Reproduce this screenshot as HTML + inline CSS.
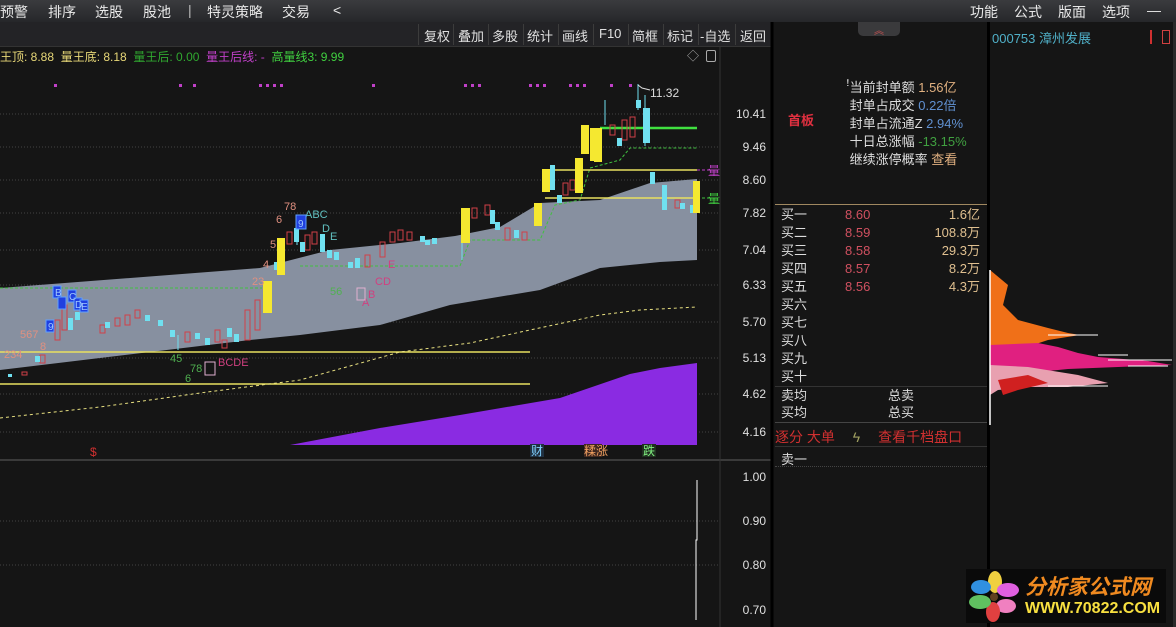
<!DOCTYPE html>
<html><head><meta charset="utf-8"><style>
*{margin:0;padding:0;box-sizing:border-box}
body{width:1176px;height:627px;background:#151515;overflow:hidden;position:relative;font-family:"Liberation Sans","Noto Sans CJK SC",sans-serif;color:#ddd}
.a{position:absolute;white-space:nowrap}
#top{position:absolute;left:0;top:0;width:1176px;height:22px;background:linear-gradient(#3a3b3e,#26272a)}
#top span{position:absolute;top:2px;font-size:14px;color:#e8e8e8}
#tb{position:absolute;left:0;top:22px;width:772px;height:25px;background:#232326;border-bottom:1px solid #333}
#tb span{position:absolute;top:4px;font-size:13px;color:#e0e0e0}
#tb i{position:absolute;top:2px;width:1px;height:21px;background:#3c3c3c}
.r{font-size:13px;color:#ddd}
.red{color:#e0505a}
</style></head><body>
<div id="top">
<span style="left:0">预警</span><span style="left:48px">排序</span><span style="left:95px">选股</span><span style="left:143px">股池</span><span style="left:188px;color:#bbb">|</span><span style="left:207px">特灵策略</span><span style="left:282px">交易</span><span style="left:333px">&lt;</span>
<span style="left:970px">功能</span><span style="left:1014px">公式</span><span style="left:1058px">版面</span><span style="left:1102px">选项</span><span style="left:1147px">—</span>
</div>
<div id="tb">
<i style="left:418px"></i><span style="left:424px">复权</span><i style="left:453px"></i><span style="left:458px">叠加</span><i style="left:488px"></i><span style="left:492px">多股</span><i style="left:523px"></i><span style="left:527px">统计</span><i style="left:558px"></i><span style="left:562px">画线</span><i style="left:593px"></i><span style="left:599px">F10</span><i style="left:628px"></i><span style="left:632px">简框</span><i style="left:663px"></i><span style="left:667px">标记</span><i style="left:698px"></i><span style="left:700px">-自选</span><i style="left:735px"></i><span style="left:740px">返回</span>
</div>
<div class="a" style="left:0;top:48px;font-size:12px"><span style="color:#e8d878">王顶: 8.88 &nbsp;量王底: 8.18</span> &nbsp;<span style="color:#30a830">量王后: 0.00</span> &nbsp;<span style="color:#c040c8">量王后线: -</span> &nbsp;<span style="color:#40d040">高量线3: 9.99</span></div>
<div class="a" style="left:687px;top:47px;font-size:12px;color:#aaa">◇</div>
<div class="a" style="left:706px;top:50px;width:10px;height:12px;border:1px solid #aaa;border-radius:2px"></div>

<svg class="a" style="left:0;top:0" width="775" height="627">
<g stroke="#444" stroke-dasharray="1,2" stroke-width="1">
<line x1="0" y1="114" x2="720" y2="114"/><line x1="0" y1="147" x2="720" y2="147"/><line x1="0" y1="180" x2="720" y2="180"/><line x1="0" y1="213" x2="720" y2="213"/><line x1="0" y1="250" x2="720" y2="250"/><line x1="0" y1="285" x2="720" y2="285"/><line x1="0" y1="322" x2="720" y2="322"/><line x1="0" y1="358" x2="720" y2="358"/><line x1="0" y1="394" x2="720" y2="394"/><line x1="0" y1="432" x2="720" y2="432"/>
<line x1="0" y1="521" x2="720" y2="521"/><line x1="0" y1="565" x2="720" y2="565"/>
</g>
<polygon fill="#8790a0" points="0,288 260,268 330,250 400,243 455,236 500,227 540,203 600,200 650,183 697,179 697,260 660,262 600,268 540,290 450,305 380,325 300,335 250,340 150,352 0,370"/>
<polygon fill="#8a2be2" points="290,445 380,428 460,415 560,398 630,374 660,368 697,363 697,445"/>
<line x1="0" y1="352" x2="530" y2="352" stroke="#e8e060" stroke-width="1.5"/>
<line x1="0" y1="384" x2="530" y2="384" stroke="#e8e060" stroke-width="1.5"/>
<polyline fill="none" stroke="#e8e080" stroke-dasharray="3,3" points="0,418 100,407 200,393 300,380 400,352 470,343 530,330 600,315 640,310 697,307"/>
<line x1="0" y1="288" x2="262" y2="288" stroke="#40c040" stroke-dasharray="3,2"/>
<polyline fill="none" stroke="#40c040" stroke-dasharray="3,2" points="300,266 460,266 470,240 540,240 555,205 580,200 590,168 620,160 630,148 697,148"/>
<line x1="600" y1="128" x2="697" y2="128" stroke="#40e040" stroke-width="2.5"/>
<line x1="545" y1="170" x2="697" y2="170" stroke="#e8e060" stroke-width="1.5"/>
<line x1="545" y1="198" x2="697" y2="198" stroke="#e8e060" stroke-width="1.5"/>
<line x1="697" y1="170" x2="712" y2="170" stroke="#c040c8" stroke-dasharray="3,2"/>
<line x1="697" y1="198" x2="712" y2="198" stroke="#40c040" stroke-dasharray="3,2"/>
<g fill="#c040c8">
<rect x="54" y="84" width="3" height="3"/><rect x="179" y="84" width="3" height="3"/><rect x="193" y="84" width="3" height="3"/><rect x="259" y="84" width="3" height="3"/><rect x="266" y="84" width="3" height="3"/><rect x="273" y="84" width="3" height="3"/><rect x="280" y="84" width="3" height="3"/><rect x="372" y="84" width="3" height="3"/><rect x="464" y="84" width="3" height="3"/><rect x="471" y="84" width="3" height="3"/><rect x="478" y="84" width="3" height="3"/><rect x="529" y="84" width="3" height="3"/><rect x="536" y="84" width="3" height="3"/><rect x="543" y="84" width="3" height="3"/><rect x="569" y="84" width="3" height="3"/><rect x="576" y="84" width="3" height="3"/><rect x="583" y="84" width="3" height="3"/><rect x="610" y="84" width="3" height="3"/><rect x="629" y="84" width="3" height="3"/>
</g>
<g fill="none" stroke="#d04048" stroke-width="1">
<rect x="22" y="372" width="5" height="3"/><rect x="40" y="355" width="5" height="8"/><rect x="55" y="320" width="5" height="20"/><rect x="62" y="305" width="5" height="25"/><rect x="100" y="325" width="5" height="8"/><rect x="115" y="318" width="5" height="8"/><rect x="125" y="315" width="5" height="10"/><rect x="135" y="310" width="5" height="8"/><rect x="185" y="332" width="5" height="10"/><rect x="215" y="330" width="5" height="12"/><rect x="222" y="340" width="5" height="8"/><rect x="245" y="310" width="5" height="30"/><rect x="255" y="300" width="5" height="30"/><rect x="287" y="232" width="5" height="12"/><rect x="305" y="235" width="5" height="15"/><rect x="312" y="232" width="5" height="12"/><rect x="365" y="255" width="5" height="12"/><rect x="380" y="242" width="5" height="15"/><rect x="390" y="232" width="5" height="10"/><rect x="398" y="230" width="5" height="10"/><rect x="407" y="232" width="5" height="8"/><rect x="472" y="208" width="5" height="10"/><rect x="485" y="205" width="5" height="10"/><rect x="505" y="228" width="5" height="12"/><rect x="522" y="232" width="5" height="8"/><rect x="563" y="183" width="5" height="12"/><rect x="570" y="180" width="5" height="10"/><rect x="610" y="125" width="5" height="10"/><rect x="622" y="120" width="5" height="20"/><rect x="630" y="117" width="5" height="20"/><rect x="675" y="200" width="5" height="8"/>
</g>
<g fill="#70e0f0">
<rect x="8" y="374" width="4" height="3"/><rect x="35" y="356" width="5" height="6"/><rect x="68" y="318" width="5" height="12"/><rect x="75" y="312" width="5" height="8"/><rect x="105" y="322" width="5" height="6"/><rect x="145" y="315" width="5" height="6"/><rect x="158" y="320" width="5" height="6"/><rect x="170" y="330" width="5" height="7"/><rect x="195" y="333" width="5" height="6"/><rect x="205" y="338" width="5" height="7"/><rect x="227" y="328" width="5" height="9"/><rect x="234" y="334" width="5" height="8"/><rect x="274" y="262" width="5" height="8"/><rect x="294" y="228" width="5" height="14"/><rect x="300" y="242" width="5" height="10"/><rect x="320" y="234" width="5" height="18"/><rect x="327" y="250" width="5" height="8"/><rect x="334" y="252" width="5" height="8"/><rect x="355" y="258" width="5" height="10"/><rect x="348" y="262" width="5" height="6"/><rect x="420" y="236" width="5" height="6"/><rect x="425" y="240" width="5" height="5"/><rect x="432" y="238" width="5" height="6"/><rect x="490" y="210" width="5" height="14"/><rect x="495" y="222" width="5" height="8"/><rect x="514" y="230" width="5" height="8"/><rect x="550" y="165" width="5" height="25"/><rect x="557" y="195" width="5" height="8"/><rect x="617" y="138" width="5" height="8"/><rect x="636" y="100" width="5" height="8"/><rect x="643" y="108" width="7" height="35"/><rect x="650" y="172" width="5" height="12"/><rect x="662" y="185" width="5" height="25"/><rect x="680" y="203" width="5" height="6"/><rect x="690" y="205" width="5" height="8"/>
</g>
<g stroke="#70e0f0"><line x1="645" y1="95" x2="645" y2="146"/><line x1="605" y1="100" x2="605" y2="125"/><line x1="638" y1="84" x2="638" y2="110"/><line x1="297" y1="215" x2="297" y2="245"/><line x1="462" y1="236" x2="462" y2="260"/><line x1="178" y1="335" x2="178" y2="350"/></g>
<g fill="#f5e830">
<rect x="263" y="281" width="9" height="32"/><rect x="277" y="238" width="8" height="37"/><rect x="461" y="208" width="9" height="35"/><rect x="534" y="203" width="8" height="23"/><rect x="542" y="169" width="8" height="23"/><rect x="575" y="158" width="8" height="35"/><rect x="581" y="125" width="8" height="29"/><rect x="590" y="128" width="8" height="33"/><rect x="594" y="128" width="8" height="34"/><rect x="693" y="181" width="7" height="32"/>
</g>
<polyline points="638,85 642,88 650,90" fill="none" stroke="#ddd"/>
<text x="650" y="97" fill="#ddd" font-size="12" font-family="Liberation Sans">11.32</text>
<g font-size="11" font-family="Liberation Sans">
<text x="4" y="358" fill="#e09080">234</text><text x="20" y="338" fill="#e09080">567</text><text x="40" y="350" fill="#e09080">8</text>
<text x="276" y="223" fill="#e09080">6</text><text x="284" y="210" fill="#e09080">78</text><text x="270" y="248" fill="#e09080">5</text><text x="263" y="268" fill="#e09080">4</text><text x="252" y="285" fill="#e09080">23</text>
<text x="305" y="218" fill="#60c0c0">ABC</text><text x="322" y="232" fill="#60c0c0">D</text><text x="330" y="240" fill="#60c0c0">E</text>
<text x="170" y="362" fill="#50b050">45</text><text x="190" y="372" fill="#50b050">78</text><text x="185" y="382" fill="#50b050">6</text><text x="330" y="295" fill="#50b050">56</text>
<text x="218" y="366" fill="#d04080">BCDE</text><text x="375" y="285" fill="#d04080">CD</text><text x="368" y="298" fill="#d04080">B</text><text x="362" y="306" fill="#d04080">A</text><text x="388" y="268" fill="#d04080">E</text>
</g>
<g fill="#2040e0" stroke="#60a0ff" stroke-width="1"><rect x="46" y="320" width="8" height="12"/><rect x="53" y="286" width="8" height="12"/><rect x="58" y="297" width="8" height="12"/><rect x="68" y="290" width="8" height="12"/><rect x="74" y="298" width="8" height="12"/><rect x="80" y="300" width="8" height="12"/><rect x="296" y="215" width="10" height="14"/></g>
<g font-size="10" fill="#a0c8ff" font-family="Liberation Sans"><text x="48" y="330">9</text><text x="55" y="296">B</text><text x="69" y="300">C</text><text x="75" y="308">D</text><text x="81" y="310">E</text><text x="298" y="227">9</text></g>
<rect x="205" y="362" width="10" height="13" fill="none" stroke="#e0b0d0"/><rect x="357" y="288" width="8" height="12" fill="none" stroke="#e0b0d0"/>
<g font-size="12" fill="#e0e0e0" font-family="Liberation Sans" text-anchor="end">
<text x="766" y="118">10.41</text><text x="766" y="151">9.46</text><text x="766" y="184">8.60</text><text x="766" y="217">7.82</text><text x="766" y="254">7.04</text><text x="766" y="289">6.33</text><text x="766" y="326">5.70</text><text x="766" y="362">5.13</text><text x="766" y="398">4.62</text><text x="766" y="436">4.16</text>
<text x="766" y="481">1.00</text><text x="766" y="525">0.90</text><text x="766" y="569">0.80</text><text x="766" y="614">0.70</text>
</g>
<text x="708" y="175" fill="#c040c8" font-size="12">量</text><text x="708" y="203" fill="#40d040" font-size="12">量</text>
<text x="90" y="456" fill="#d03030" font-size="12">$</text>
<rect x="530" y="444" width="14" height="13" fill="#203040"/><text x="531" y="455" fill="#80d0ff" font-size="12">财</text>
<rect x="584" y="444" width="18" height="13" fill="#402820"/><text x="584" y="455" fill="#f0a060" font-size="12">糅涨</text>
<rect x="642" y="444" width="14" height="13" fill="#203020"/><text x="643" y="455" fill="#80f080" font-size="12">跌</text>
<line x1="0" y1="460" x2="772" y2="460" stroke="#3a3a3a" stroke-width="2"/>
<line x1="720" y1="47" x2="720" y2="627" stroke="#333"/>
<line x1="772" y1="22" x2="772" y2="627" stroke="#000" stroke-width="3"/>
<polyline points="697,480 697,540 696,540 696,620" fill="none" stroke="#fff"/>
</svg>

<!-- right panel -->
<div class="a" style="left:858px;top:22px;width:42px;height:14px;background:#3a3a3c;border-radius:0 0 5px 5px;color:#c05050;font-size:10px;text-align:center">︽</div>
<div class="a" style="left:788px;top:110px;font-size:13px;font-weight:bold;color:#e03040">首板</div>
<div class="a r" style="left:846px;top:79px;line-height:18px">
<div>ꜝ当前封单额 <span style="color:#e0b080">1.56亿</span></div>
<div>&nbsp;封单占成交 <span style="color:#6090d0">0.22倍</span></div>
<div>&nbsp;封单占流通Z <span style="color:#6090d0">2.94%</span></div>
<div>&nbsp;十日总涨幅 <span style="color:#40a040">-13.15%</span></div>
<div>&nbsp;继续涨停概率 <span style="color:#e0b080">查看</span></div>
</div>
<div class="a" style="left:775px;top:204px;width:212px;height:1px;background:#a08860"></div>
<div class="a r" style="left:781px;top:206px;line-height:18px">买一<br>买二<br>买三<br>买四<br>买五<br>买六<br>买七<br>买八<br>买九<br>买十</div>
<div class="a r" style="left:845px;top:206px;line-height:18px;color:#d05060">8.60<br>8.59<br>8.58<br>8.57<br>8.56</div>
<div class="a r" style="left:900px;width:80px;top:206px;line-height:18px;color:#e0c090;text-align:right">1.6亿<br>108.8万<br>29.3万<br>8.2万<br>4.3万</div>
<div class="a" style="left:775px;top:386px;width:212px;height:1px;background:#333"></div>
<div class="a r" style="left:781px;top:387px;line-height:17px">卖均<br>买均</div>
<div class="a r" style="left:888px;top:387px;line-height:17px">总卖<br>总买</div>
<div class="a" style="left:775px;top:422px;width:212px;height:1px;background:#444"></div>
<div class="a" style="left:775px;top:427px;font-size:14px;color:#d03030">逐分 大单 <span style="color:#a0a060;margin-left:14px">ϟ</span> <span style="margin-left:14px">查看千档盘口</span></div>
<div class="a" style="left:775px;top:446px;width:212px;height:1px;background:#333"></div>
<div class="a r" style="left:781px;top:449px">卖一</div>
<div class="a" style="left:775px;top:466px;width:212px;border-top:1px dotted #444"></div>
<div class="a" style="left:987px;top:22px;width:3px;height:605px;background:#000"></div>
<div class="a" style="left:1173px;top:22px;width:3px;height:605px;background:#2a2a2a"></div>
<div class="a" style="left:992px;top:28px;font-size:13px;color:#50b0c8">000753 漳州发展</div>
<div class="a" style="left:1150px;top:30px;width:10px;height:14px;border-left:2px solid #d03030"></div>
<div class="a" style="left:1162px;top:30px;width:8px;height:14px;border:1px solid #d04040"></div>
<svg class="a" style="left:988px;top:265px" width="186" height="165">
<polygon fill="#f07018" points="2,5 20,20 15,40 30,55 60,63 80,68 92,70 60,75 30,85 15,95 2,100"/>
<polygon fill="#e02080" points="2,80 50,78 70,82 90,88 110,92 160,96 184,100 130,102 80,104 40,108 10,110 2,112"/>
<polygon fill="#e8a0b0" points="2,100 40,102 90,110 120,118 80,122 40,122 10,125 2,130"/>
<polygon fill="#d02020" points="10,115 40,110 60,118 30,125 15,130"/>
<g stroke="#fff"><line x1="60" y1="70" x2="110" y2="70"/><line x1="110" y1="90" x2="140" y2="90"/><line x1="120" y1="95" x2="184" y2="95"/><line x1="140" y1="101" x2="180" y2="101"/><line x1="60" y1="121" x2="120" y2="121"/></g>
<line x1="2" y1="5" x2="2" y2="160" stroke="#fff" stroke-width="1.5"/>
</svg>
<!-- logo -->
<div class="a" style="left:966px;top:569px;width:200px;height:54px;background:#0a0a0a"></div>
<svg class="a" style="left:968px;top:570px" width="55" height="52">
<ellipse cx="27" cy="12" rx="7" ry="11" fill="#f0d040"/><ellipse cx="40" cy="20" rx="11" ry="7" fill="#e060e0"/><ellipse cx="38" cy="36" rx="10" ry="7" fill="#f080c0"/><ellipse cx="25" cy="42" rx="7" ry="10" fill="#e04040"/><ellipse cx="12" cy="32" rx="11" ry="7" fill="#60c060"/><ellipse cx="13" cy="17" rx="10" ry="7" fill="#3090e0"/><circle cx="26" cy="27" r="4" fill="#604020"/>
</svg>
<div class="a" style="left:1025px;top:571px;font-size:21px;font-weight:bold;font-style:italic;color:#f08a20">分析家公式网</div>
<div class="a" style="left:1025px;top:600px;font-size:16px;font-weight:bold;color:#f8e040">WWW.70822.COM</div>
</body></html>
